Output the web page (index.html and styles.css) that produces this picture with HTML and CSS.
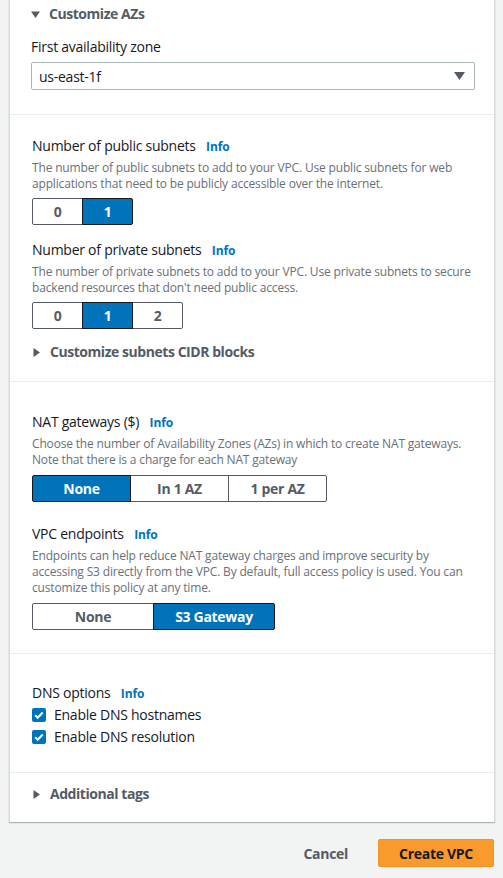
FILE: index.html
```html
<!DOCTYPE html>
<html>
<head>
<meta charset="utf-8">
<link rel="stylesheet" href="styles.css">
</head>
<body>
<div class="card">
  <section class="sec sec-az">
    <div class="expander"><svg class="tri" width="9" height="9" viewBox="0 0 9 9"><path d="M0 1.5h9L4.5 8z"/></svg>Customize AZs</div>
    <div class="label">First availability zone</div>
    <div class="select"><span>us-east-1f</span><svg width="11" height="8" viewBox="0 0 11 8"><path d="M0 0h11L5.5 8z"/></svg></div>
  </section>

  <section class="sec sec-subnets">
    <div class="label">Number of public subnets <a class="info">Info</a></div>
    <p class="desc">The number of public subnets to add to your VPC. Use public subnets for web applications that need to be publicly accessible over the internet.</p>
    <div class="seg seg-50"><span>0</span><span class="on">1</span></div>

    <div class="label l2">Number of private subnets <a class="info">Info</a></div>
    <p class="desc">The number of private subnets to add to your VPC. Use private subnets to secure backend resources that don't need public access.</p>
    <div class="seg seg-50"><span>0</span><span class="on">1</span><span>2</span></div>

    <div class="expander ex2"><svg class="tri" width="9" height="9" viewBox="0 0 9 9"><path d="M1.5 0v9L8 4.5z"/></svg>Customize subnets CIDR blocks</div>
  </section>

  <section class="sec sec-nat">
    <div class="label">NAT gateways ($) <a class="info">Info</a></div>
    <p class="desc">Choose the number of Availability Zones (AZs) in which to create NAT gateways. Note that there is a charge for each NAT gateway</p>
    <div class="seg seg-99"><span class="on">None</span><span>In 1 AZ</span><span>1 per AZ</span></div>

    <div class="label l3">VPC endpoints <a class="info">Info</a></div>
    <p class="desc">Endpoints can help reduce NAT gateway charges and improve security by accessing S3 directly from the VPC. By default, full access policy is used. You can customize this policy at any time.</p>
    <div class="seg seg-121"><span>None</span><span class="on">S3 Gateway</span></div>
  </section>

  <section class="sec sec-dns">
    <div class="label">DNS options <a class="info">Info</a></div>
    <div class="check"><span class="box"><svg width="14" height="14" viewBox="0 0 14 14"><path d="M3.2 7.2l2.5 2.5 5-5.2" fill="none" stroke="#fff" stroke-width="2"/></svg></span>Enable DNS hostnames</div>
    <div class="check"><span class="box"><svg width="14" height="14" viewBox="0 0 14 14"><path d="M3.2 7.2l2.5 2.5 5-5.2" fill="none" stroke="#fff" stroke-width="2"/></svg></span>Enable DNS resolution</div>
  </section>

  <section class="sec sec-tags">
    <div class="expander"><svg class="tri" width="9" height="9" viewBox="0 0 9 9"><path d="M1.5 0v9L8 4.5z"/></svg>Additional tags</div>
  </section>
</div>

<div class="actions">
  <button class="btn-link">Cancel</button>
  <button class="btn-primary">Create VPC</button>
</div>
</body>
</html>
```

FILE: styles.css
```css
* { box-sizing: border-box; }
html, body { margin: 0; padding: 0; }
body {
  background: #f2f3f3;
  font-family: "Open Sans", "Noto Sans", sans-serif;
  color: #16191f;
  width: 503px;
  height: 878px;
  overflow: hidden;
  letter-spacing: -0.25px;
}
.card {
  margin-left: 9px;
  width: 486px;
  background: #fff;
  border-left: 1px solid #d5dbdb;
  border-right: 1px solid #d5dbdb;
  box-shadow: 0 1px 1px 0 rgba(0, 28, 36, 0.3);
}
.sec {
  padding: 0 20px 0 22px;
  border-top: 1px solid #eaeded;
}
.sec:first-child { border-top: none; }
.sec-az { padding: 4px 20px 24px 21px; }
.sec-subnets { padding-top: 21px; padding-bottom: 19px; }
.sec-nat { padding-top: 30px; padding-bottom: 23px; }
.sec-dns { padding-top: 29px; padding-bottom: 24px; }
.sec-tags { padding-top: 11px; padding-bottom: 18px; }

.expander {
  display: flex;
  align-items: center;
  font-weight: 700;
  font-size: 14px;
  line-height: 20px;
  color: #545b64;
  letter-spacing: -0.45px;
}
.tri { fill: #545b64; margin-right: 9px; flex: none; }
.ex2 { margin-top: 13px; }

.label {
  font-size: 14px;
  line-height: 20px;
  color: #16191f;
}
.sec-az .label { margin-top: 13px; }
.l2 { margin-top: 15px; }
.l3 { margin-top: 22px; }
.info {
  color: #0073bb;
  font-weight: 700;
  font-size: 12px;
  margin-left: 7px;
  letter-spacing: -0.1px;
}
.desc {
  margin: 3px 0 0;
  font-size: 12px;
  line-height: 16px;
  color: #687078;
  letter-spacing: -0.17px;
}
.select {
  margin-top: 5px;
  height: 28px;
  width: 444px;
  border: 1px solid #aab7b8;
  border-radius: 2px;
  display: flex;
  align-items: center;
  justify-content: space-between;
  padding: 0 9px 0 7px;
  font-size: 14px;
  color: #16191f;
}
.select svg { fill: #545b64; }

.seg {
  display: flex;
  margin-top: 6px;
  height: 27px;
}
.seg span {
  display: flex;
  align-items: center;
  justify-content: center;
  border: 1px solid #545b64;
  margin-left: -1px;
  background: #fff;
  color: #545b64;
  font-weight: 700;
  font-size: 14px;
  letter-spacing: -0.3px;
}
.seg span:first-child { margin-left: 0; border-radius: 2px 0 0 2px; }
.seg span:last-child { border-radius: 0 2px 2px 0; }
.seg span.on {
  background: #0073bb;
  color: #fff;
  border-color: #16191f;
  position: relative;
  z-index: 1;
}
.seg-50 span { width: 51px; }
.seg-99 span { width: 99px; }
.seg-121 span { width: 122px; }
.sec-nat .seg { margin-top: 7px; }

.check {
  display: flex;
  align-items: center;
  height: 22px;
  line-height: 22px;
  font-size: 14px;
  color: #16191f;
}
.box {
  width: 14px;
  height: 14px;
  background: #0073bb;
  border-radius: 2px;
  margin-right: 8px;
  display: flex;
}
.sec-dns .label { margin-bottom: 0; }
.sec-dns .check:first-of-type { margin-top: -1px; }

.actions {
  display: flex;
  justify-content: flex-end;
  align-items: center;
  padding: 17px 9px 0 0;
  gap: 30px;
}
.btn-link {
  background: none;
  border: none;
  font-family: inherit;
  font-weight: 700;
  font-size: 14px;
  color: #545b64;
  padding: 0;
  letter-spacing: -0.3px;
}
.btn-primary {
  background: #fb9a2c;
  border: 1px solid #f4922a;
  border-radius: 2px;
  font-family: inherit;
  font-weight: 700;
  font-size: 14px;
  color: #16191f;
  width: 116px;
  height: 28px;
  padding: 0;
  letter-spacing: -0.3px;
}
```
